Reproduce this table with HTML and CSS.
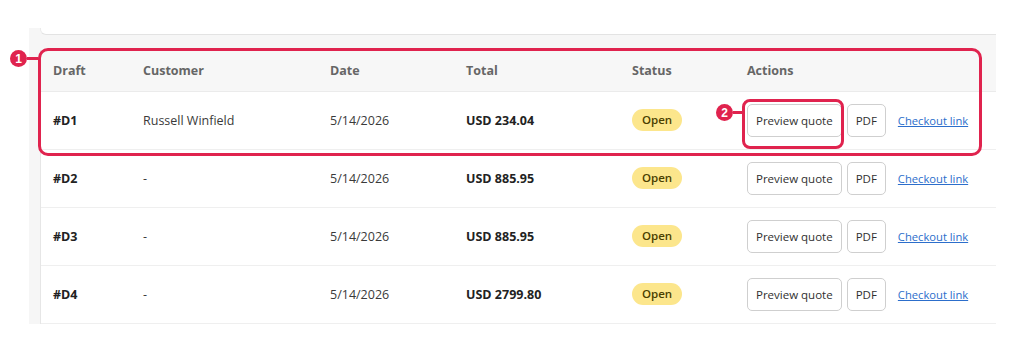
FILE: index.html
```html
<!DOCTYPE html>
<html lang="en">
<head>
<meta charset="utf-8">
<title>Draft orders</title>
<link rel="stylesheet" href="styles.css">
</head>
<body>
<div class="page">
  <div class="panel">
    <div class="top-card"></div>
    <div class="table-card">
      <table class="drafts">
        <colgroup>
          <col class="c-draft"><col class="c-customer"><col class="c-date"><col class="c-total"><col class="c-status"><col class="c-actions">
        </colgroup>
        <thead>
          <tr><th>Draft</th><th>Customer</th><th>Date</th><th>Total</th><th>Status</th><th>Actions</th></tr>
        </thead>
        <tbody>
          <tr>
            <td class="strong">#D1</td><td>Russell Winfield</td><td>5/14/2026</td><td class="strong">USD 234.04</td>
            <td><span class="badge">Open</span></td>
            <td><div class="actions"><button class="btn">Preview quote</button><button class="btn">PDF</button><a class="link" href="#">Checkout link</a></div></td>
          </tr>
          <tr>
            <td class="strong">#D2</td><td>-</td><td>5/14/2026</td><td class="strong">USD 885.95</td>
            <td><span class="badge">Open</span></td>
            <td><div class="actions"><button class="btn">Preview quote</button><button class="btn">PDF</button><a class="link" href="#">Checkout link</a></div></td>
          </tr>
          <tr>
            <td class="strong">#D3</td><td>-</td><td>5/14/2026</td><td class="strong">USD 885.95</td>
            <td><span class="badge">Open</span></td>
            <td><div class="actions"><button class="btn">Preview quote</button><button class="btn">PDF</button><a class="link" href="#">Checkout link</a></div></td>
          </tr>
          <tr>
            <td class="strong">#D4</td><td>-</td><td>5/14/2026</td><td class="strong">USD 2799.80</td>
            <td><span class="badge">Open</span></td>
            <td><div class="actions"><button class="btn">Preview quote</button><button class="btn">PDF</button><a class="link" href="#">Checkout link</a></div></td>
          </tr>
        </tbody>
      </table>
    </div>
  </div>

  <div class="callout callout-1"></div>
  <div class="marker marker-1"><span class="num">1</span><span class="tick"></span></div>
  <div class="callout callout-2"></div>
  <div class="marker marker-2"><span class="num">2</span><span class="tick"></span></div>
</div>
</body>
</html>
```

FILE: styles.css
```css
* { box-sizing: border-box; }
html, body { margin: 0; padding: 0; background: #ffffff; }
body {
  font-family: "Open Sans", "Noto Sans", "Liberation Sans", sans-serif;
  font-size: 12.5px;
  color: #303030;
}
.page {
  position: relative;
  width: 1024px;
  height: 352px;
  padding-top: 28px;
}
.panel {
  margin-left: 29px;
  width: 967px;
  background: #f6f6f6;
  padding-left: 11px;
}
.top-card {
  height: 7px;
  background: #ffffff;
  border-bottom: 1px solid #e3e3e3;
  border-left: 1px solid #ebebeb;
  border-bottom-left-radius: 6px;
}
.table-card {
  margin-top: 15px;
  background: #ffffff;
  border-left: 1px solid #e6e6e6;
}
.drafts {
  width: 100%;
  border-collapse: collapse;
  table-layout: fixed;
}
.c-draft { width: 90px; }
.c-customer { width: 187px; }
.c-date { width: 136px; }
.c-total { width: 166px; }
.c-status { width: 115px; }
.drafts th {
  height: 41px;
  background: #f7f7f7;
  color: #666666;
  font-weight: 700;
  text-align: left;
  padding: 1px 0 0 12px;
  border-bottom: 1px solid #ebebeb;
}
.drafts td {
  height: 58px;
  padding: 0 0 0 12px;
  border-bottom: 1px solid #efefef;
  color: #3a3a3a;
  vertical-align: middle;
}
.drafts td.strong { font-weight: 700; color: #222222; }
.badge {
  display: inline-block;
  background: #fce68c;
  color: #4a3f00;
  font-weight: 600;
  font-size: 11.5px;
  line-height: 16px;
  padding: 3px 10px;
  border-radius: 12px;
}
.actions {
  display: flex;
  align-items: center;
  gap: 5px;
}
.btn {
  font-family: inherit;
  font-size: 11.5px;
  color: #303030;
  background: #ffffff;
  border: 1px solid #cfcfcf;
  border-radius: 5px;
  height: 33px;
  padding: 0 8px;
}
.link {
  margin-left: 7px;
  color: #2c6ecb;
  text-decoration: underline;
  font-size: 11.2px;
}
.callout {
  position: absolute;
  border: 3px solid #e0234e;
  border-radius: 10px;
}
.callout-1 { left: 38px; top: 48px; width: 944px; height: 108px; }
.callout-2 { left: 742px; top: 99px; width: 102px; height: 50px; border-radius: 8px; }
.marker {
  position: absolute;
  display: flex;
  align-items: center;
}
.marker .num {
  width: 17px;
  height: 17px;
  border-radius: 50%;
  background: #e0234e;
  color: #ffffff;
  font-family: "Liberation Sans", sans-serif;
  font-weight: 700;
  font-size: 12px;
  display: flex;
  align-items: center;
  justify-content: center;
}
.marker .tick {
  height: 3px;
  background: #e0234e;
}
.marker-1 { left: 10px; top: 50px; }
.marker-1 .tick { width: 11px; }
.marker-2 { left: 716px; top: 104px; }
.marker-2 .tick { width: 10px; }
```
